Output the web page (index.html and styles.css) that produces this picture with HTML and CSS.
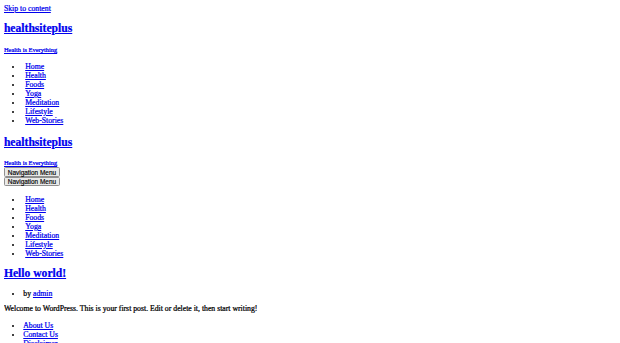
FILE: index.html
```html
<!DOCTYPE html>
<html lang="en">
<head>
<meta charset="utf-8">
<title>healthsiteplus</title>
<link rel="stylesheet" href="styles.css">
</head>
<body>
<a class="skip-link" href="#content">Skip to content</a>
<header class="site-header">
  <h1 class="site-title"><a href="#">healthsiteplus</a></h1>
  <p class="site-description"><a href="#">Health is Everything</a></p>
  <ul class="menu">
    <li><a href="#">Home</a></li>
    <li><a href="#">Health</a></li>
    <li><a href="#">Foods</a></li>
    <li><a href="#">Yoga</a></li>
    <li><a href="#">Meditation</a></li>
    <li><a href="#">Lifestyle</a></li>
    <li><a href="#">Web-Stories</a></li>
  </ul>
</header>
<header class="site-header site-header--mobile">
  <h1 class="site-title"><a href="#">healthsiteplus</a></h1>
  <p class="site-description"><a href="#">Health is Everything</a></p>
  <div class="nav-toggles">
    <button class="nav-toggle" type="button">Navigation Menu</button>
    <button class="nav-toggle" type="button">Navigation Menu</button>
  </div>
  <ul class="menu">
    <li><a href="#">Home</a></li>
    <li><a href="#">Health</a></li>
    <li><a href="#">Foods</a></li>
    <li><a href="#">Yoga</a></li>
    <li><a href="#">Meditation</a></li>
    <li><a href="#">Lifestyle</a></li>
    <li><a href="#">Web-Stories</a></li>
  </ul>
</header>
<main id="content">
  <article class="post">
    <h2 class="entry-title"><a href="#">Hello world!</a></h2>
    <ul class="entry-meta">
      <li>by <a href="#">admin</a></li>
    </ul>
    <p class="entry-content">Welcome to WordPress. This is your first post. Edit or delete it, then start writing!</p>
  </article>
</main>
<footer class="site-footer">
  <ul class="footer-menu">
    <li><a href="#">About Us</a></li>
    <li><a href="#">Contact Us</a></li>
    <li><a href="#">Disclaimer</a></li>
    <li><a href="#">Privacy Policy</a></li>
  </ul>
</footer>
</body>
</html>
```
FILE: styles.css
```css
html {
  zoom: 0.484375;
}
body {
  margin: 8px;
  font-family: "Liberation Serif", "Times New Roman", serif;
  font-size: 16px;
  background: #fff;
  color: #000;
  -webkit-text-stroke: 0.5px currentColor;
}
a {
  color: #0000ee;
}
.site-title {
  font-size: 24px;
  margin: 18px 0 22px;
}
.site-header--mobile .site-title {
  margin: 23px 0 19px;
}
.site-description {
  margin: 0 0 16px;
}
.site-description a {
  font-size: 13.33px;
}
.site-header--mobile .site-description {
  margin-bottom: 0;
}
.nav-toggles {
  margin-bottom: 17px;
}
.nav-toggle {
  display: block;
  box-sizing: border-box;
  height: 19.6px;
  margin: 0;
  padding: 0 6px;
  font-family: "Liberation Sans", Arial, sans-serif;
  font-size: 13.33px;
  color: #000;
  background: #e9e9e9;
  border: 1px solid #8f8f8f;
  border-radius: 3px;
  -webkit-text-stroke: 0.3px currentColor;
}
.menu {
  margin: 16px 0;
  padding-left: 40px;
}
.menu a {
  padding-left: 4px;
}
.entry-title {
  font-size: 24px;
  margin: 20px 0 18px;
}
.entry-meta {
  margin: 16px 0 13px;
  padding-left: 40px;
}
.entry-content {
  margin: 13px 0 17px;
}
.footer-menu {
  margin: 17px 0;
  padding-left: 40px;
}
```
